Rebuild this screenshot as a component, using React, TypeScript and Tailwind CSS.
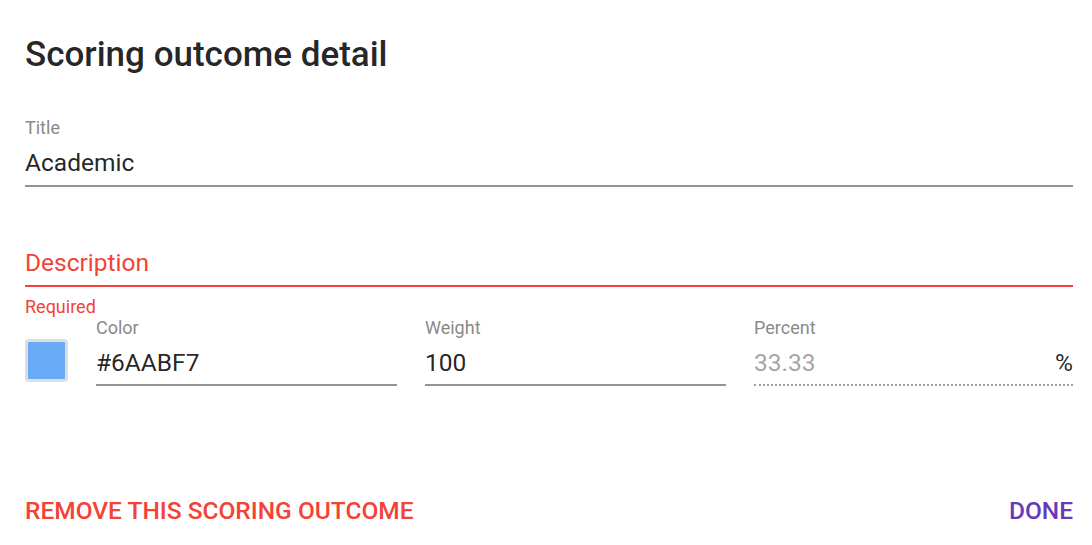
export default function App() {
  return (
    <div className="min-h-screen bg-white pl-[25px] pr-[19px] pt-[36px] font-['Roboto',sans-serif] text-[rgba(0,0,0,0.87)]">
      <h2 className="text-[35px] font-medium leading-[38px]">Scoring outcome detail</h2>

      {/* Title */}
      <div className="mt-[44px] border-b-2 border-[#949494] pb-[7px]">
        <div className="text-[18px] leading-[20px] text-[#8a8a8a]">Title</div>
        <div className="mt-[10px] text-[24.5px] leading-[30px]">Academic</div>
      </div>

      {/* Description */}
      <div className="mt-[61px] border-b-2 border-[#f44336] pb-[7px]">
        <div className="text-[24.5px] leading-[30px] text-[#f44336]">Description</div>
      </div>
      <div className="mt-[10px] text-[18px] leading-[20px] text-[#f44336]">Required</div>

      {/* Color / Weight / Percent */}
      <div className="mt-[1px] flex items-start gap-[28px]">
        <div className="mt-[21px] h-[43px] w-[43px] shrink-0 rounded-[4px] border-[3px] border-[#dedede] bg-[#6aabf7]" />
        <div className="flex flex-1 gap-[28px]">
          <Field label="Color" value="#6AABF7" className="w-[301px]" />
          <Field label="Weight" value="100" className="w-[301px]" />
          <div className="flex-1 border-b-2 border-dotted border-[#9e9e9e] pb-[6px]">
            <div className="text-[18px] leading-[20px] text-[#8a8a8a]">Percent</div>
            <div className="mt-[10px] flex justify-between text-[24.5px] leading-[30px]">
              <span className="text-[#a6a6a6]">33.33</span>
              <span>%</span>
            </div>
          </div>
        </div>
      </div>

      <div className="mt-[110px] flex justify-between">
        <button className="text-[24.5px] font-medium uppercase leading-[30px] text-[#f44336]">Remove this scoring outcome</button>
        <button className="text-[24.5px] font-medium uppercase leading-[30px] text-[#673ab7]">Done</button>
      </div>
    </div>
  );
}

function Field({ label, value, className }: { label: string; value: string; className?: string }) {
  return (
    <div className={`border-b-2 border-[#949494] pb-[6px] ${className ?? ''}`}>
      <div className="text-[18px] leading-[20px] text-[#8a8a8a]">{label}</div>
      <div className="mt-[10px] text-[24.5px] leading-[30px]">{value}</div>
    </div>
  );
}
